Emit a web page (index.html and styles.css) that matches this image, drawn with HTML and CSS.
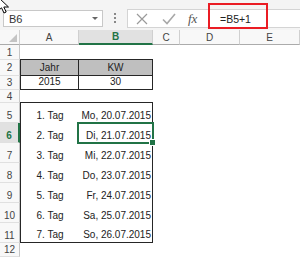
FILE: index.html
```html
<!DOCTYPE html>
<html lang="de">
<head>
  <meta charset="UTF-8">
  <link rel="stylesheet" href="styles.css">
</head>
<body>
  <!-- Bearbeitungsleiste -->
  <div class="toolbar">
    <div class="namebox">
      <span>B6</span>
      <span class="caret"></span>
    </div>
    <div class="grip"><i></i><i></i><i></i></div>
    <div class="formula">
      <div class="fbtns">
        <svg width="12" height="12" viewBox="0 0 12 12"><path d="M1 1 L11 11 M11 1 L1 11" stroke="#9a9a9a" stroke-width="1.2" fill="none"/></svg>
        <svg width="14" height="12" viewBox="0 0 14 12"><path d="M1 6.5 L5 10.5 L13 1" stroke="#a8a8a8" stroke-width="1.6" fill="none"/></svg>
        <span class="fx">fx</span>
      </div>
      <div class="finput">=B5+1</div>
    </div>
  </div>
  <div class="mark"></div>

  <!-- Tabellenblatt -->
  <div class="sheet">
    <div class="hd corner"><span class="tri"></span></div>
    <div class="hd">A</div>
    <div class="hd active-col">B</div>
    <div class="hd">C</div>
    <div class="hd">D</div>
    <div class="hd">E</div>

    <div class="rh">1</div>
    <div class="c bb"></div><div class="c bb"></div><div class="c"></div><div class="c"></div><div class="c"></div>

    <div class="rh">2</div>
    <div class="c ctr gray bl br bb">Jahr</div><div class="c ctr gray br bb">KW</div><div class="c"></div><div class="c"></div><div class="c"></div>

    <div class="rh">3</div>
    <div class="c ctr bl br bb">2015</div><div class="c ctr br bb">30</div><div class="c"></div><div class="c"></div><div class="c"></div>

    <div class="rh">4</div>
    <div class="c bb"></div><div class="c bb"></div><div class="c"></div><div class="c"></div><div class="c"></div>

    <div class="rh big">5</div>
    <div class="c ctr bl">1. Tag</div><div class="c rt br">Mo, 20.07.2015</div><div class="c"></div><div class="c"></div><div class="c"></div>

    <div class="rh big active-row">6</div>
    <div class="c ctr bl">2. Tag</div><div class="c rt br sel">Di, 21.07.2015</div><div class="c"></div><div class="c"></div><div class="c"></div>

    <div class="rh big">7</div>
    <div class="c ctr bl">3. Tag</div><div class="c rt br">Mi, 22.07.2015</div><div class="c"></div><div class="c"></div><div class="c"></div>

    <div class="rh big">8</div>
    <div class="c ctr bl">4. Tag</div><div class="c rt br">Do, 23.07.2015</div><div class="c"></div><div class="c"></div><div class="c"></div>

    <div class="rh big">9</div>
    <div class="c ctr bl">5. Tag</div><div class="c rt br">Fr, 24.07.2015</div><div class="c"></div><div class="c"></div><div class="c"></div>

    <div class="rh big">10</div>
    <div class="c ctr bl">6. Tag</div><div class="c rt br">Sa, 25.07.2015</div><div class="c"></div><div class="c"></div><div class="c"></div>

    <div class="rh big">11</div>
    <div class="c ctr bl bb">7. Tag</div><div class="c rt br bb">So, 26.07.2015</div><div class="c"></div><div class="c"></div><div class="c"></div>

    <div class="rh">12</div>
    <div class="c"></div><div class="c"></div><div class="c"></div><div class="c"></div><div class="c"></div>
  </div>

  <!-- Mauszeiger -->
  <svg class="cursor" width="12" height="16" viewBox="0 0 12 16">
    <path d="M-2 -3 L-2 11 L1.5 7.8 L4 13 L6.2 12 L3.8 7 L8.5 7 Z" fill="#fff" stroke="#000" stroke-width="1"/>
  </svg>
</body>
</html>
```

FILE: styles.css
```css
/* Grundlagen */
* {
  margin: 0;
  padding: 0;
  box-sizing: border-box;
}

body {
  width: 300px;
  height: 257px;
  overflow: hidden;
  position: relative;
  background: #fff;
  font-family: "Liberation Sans", Arial, sans-serif;
  color: #222;
}

/* Bearbeitungsleiste */
.toolbar {
  height: 30px;
  display: flex;
  align-items: flex-start;
  padding-top: 9px;
  background: #f4f4f4;
}

.namebox {
  margin-left: 3px;
  margin-top: 1px;
  width: 100px;
  height: 17px;
  border: 1px solid #c8c8c8;
  background: #fff;
  display: flex;
  align-items: center;
  justify-content: space-between;
  padding: 0 4px 0 5px;
  font-size: 11px;
  color: #333;
}

.caret {
  width: 0;
  height: 0;
  border-left: 3px solid transparent;
  border-right: 3px solid transparent;
  border-top: 3px solid #666;
}

.grip {
  width: 24px;
  height: 18px;
  display: flex;
  flex-direction: column;
  align-items: center;
  justify-content: center;
  gap: 2px;
}

.grip i {
  width: 2px;
  height: 2px;
  background: #888;
}

.formula {
  flex: 1;
  height: 19px;
  display: flex;
  align-items: center;
  background: #fff;
  border: 1px solid #d4d4d4;
  border-right: none;
}

.fbtns {
  width: 78px;
  display: flex;
  align-items: center;
  gap: 14px;
  padding-left: 8px;
}

.fx {
  font-family: "Liberation Serif", "Times New Roman", serif;
  font-style: italic;
  font-size: 13px;
  color: #555;
  margin-left: -2px;
}

.finput {
  padding-left: 14px;
  font-size: 10.5px;
  color: #222;
}

/* rote Markierung */
.mark {
  position: absolute;
  left: 208px;
  top: 3px;
  width: 60px;
  height: 26px;
  border: 2px solid #ea1c24;
}

/* Tabellenblatt */
.sheet {
  display: grid;
  grid-template-columns: 20px 59px 74px 27px 60px 60px;
  grid-template-rows: 15px 15px 16px 14px 13px repeat(7, 20px) 14px;
  font-size: 10px;
}

.hd {
  background: #f8f8f8;
  border-right: 1px solid #d0d0d0;
  border-bottom: 1px solid #ababab;
  display: flex;
  align-items: center;
  justify-content: center;
  color: #444;
  font-size: 10px;
}

.corner {
  position: relative;
}

.tri {
  position: absolute;
  right: 2px;
  bottom: 2px;
  width: 0;
  height: 0;
  border-left: 8px solid transparent;
  border-bottom: 8px solid #c4c4c4;
}

.active-col {
  background: #e1e1e1;
  color: #217346;
  font-weight: bold;
  border-bottom: 2px solid #217346;
}

.rh {
  background: #f8f8f8;
  border-right: 1px solid #c6c6c6;
  border-bottom: 1px solid #e0e0e0;
  display: flex;
  align-items: center;
  justify-content: center;
  color: #444;
}

.rh.big {
  align-items: flex-end;
  padding-bottom: 1px;
}

.active-row {
  background: #e1e1e1;
  color: #217346;
  font-weight: bold;
  border-right: 2px solid #217346;
}

/* Zellen */
.c {
  display: flex;
  align-items: flex-end;
  line-height: 13px;
  white-space: nowrap;
  overflow: hidden;
  padding-bottom: 1px;
}

.ctr {
  justify-content: center;
}

.rt {
  justify-content: flex-end;
  padding-right: 1px;
}

.gray {
  background: #bfbfbf;
}

.bl { border-left: 1px solid #262626; }
.br { border-right: 1px solid #262626; }
.bb { border-bottom: 1px solid #262626; }

/* aktive Zelle */
.sel {
  position: relative;
  overflow: visible;
}

.sel::after {
  content: "";
  position: absolute;
  left: -2px;
  top: -1px;
  right: -2px;
  bottom: -1px;
  border: 2px solid #217346;
}

.sel::before {
  content: "";
  position: absolute;
  right: -4px;
  bottom: -3px;
  width: 5px;
  height: 5px;
  background: #217346;
  border: 1px solid #fff;
  z-index: 1;
}

.cursor {
  position: absolute;
  left: 0;
  top: 0;
  overflow: visible;
}
```
